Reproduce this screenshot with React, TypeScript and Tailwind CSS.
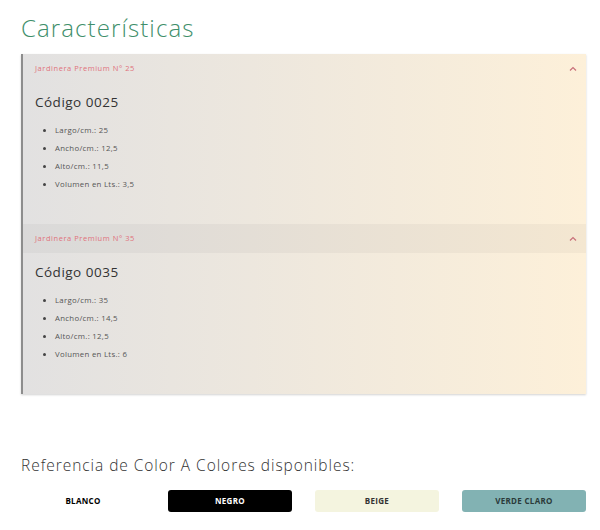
import { useState } from "react";

interface Producto {
  titulo: string;
  codigo: string;
  medidas: string[];
}

const productos: Producto[] = [
  {
    titulo: "Jardinera Premium N° 25",
    codigo: "Código 0025",
    medidas: ["Largo/cm.: 25", "Ancho/cm.: 12,5", "Alto/cm.: 11,5", "Volumen en Lts.: 3,5"],
  },
  {
    titulo: "Jardinera Premium N° 35",
    codigo: "Código 0035",
    medidas: ["Largo/cm.: 35", "Ancho/cm.: 14,5", "Alto/cm.: 12,5", "Volumen en Lts.: 6"],
  },
];

function Caret() {
  return (
    <svg width="8" height="6" viewBox="0 0 8 6" fill="none">
      <path d="M1 4.5 L4 1.5 L7 4.5" stroke="#c9707a" strokeWidth="1.2" />
    </svg>
  );
}

function Seccion(props: { p: Producto; activo: boolean }) {
  const [abierto, setAbierto] = useState(true);
  return (
    <div>
      <div
        className={
          "h-[29px] pl-[12px] pr-[9px] flex items-center justify-between cursor-pointer " +
          (props.activo ? "bg-black/[0.035]" : "")
        }
        onClick={() => setAbierto(!abierto)}
      >
        <span className="text-[7.5px] tracking-[0.55px] text-[#e0727c]">{props.p.titulo}</span>
        <Caret />
      </div>
      {abierto && (
        <div className="pl-[12px] pt-[9px] pb-[31px]">
          <div className="text-[13.5px] leading-[20px] tracking-[0.5px] text-[#333]">{props.p.codigo}</div>
          <ul className="mt-[9px] pl-[20px] list-disc text-[7.8px] tracking-[0.3px] text-[#555] marker:text-[#444]">
            {props.p.medidas.map((m) => (
              <li key={m} className="leading-[18px]">
                {m}
              </li>
            ))}
          </ul>
        </div>
      )}
    </div>
  );
}

export default function App() {
  const colores = [
    { nombre: "BLANCO", cls: "bg-white text-black" },
    { nombre: "NEGRO", cls: "bg-black text-white" },
    { nombre: "BEIGE", cls: "bg-[#f4f4df] text-[#333]" },
    { nombre: "VERDE CLARO", cls: "bg-[#82b2b3] text-[#2b3a3a]" },
  ];
  return (
    <div className="w-[600px] h-[530px] bg-white px-[21px] font-['Open_Sans',sans-serif]">
      <h1 className="pt-[14px] text-[24px] leading-[28px] font-light text-[#3f8f6b] tracking-[1.1px]">Características</h1>
      <div className="mt-[12px] w-[565px] border-l-2 border-[#8d8d8d] bg-gradient-to-r from-[#e2e1e1] to-[#fdf0d9] shadow-[0_1px_2px_rgba(0,0,0,0.18)]">
        <Seccion p={productos[0]} activo={false} />
        <Seccion p={productos[1]} activo={true} />
      </div>
      <p className="mt-[61px] text-[15.5px] leading-[20px] font-light tracking-[0.95px] text-[#333]">
        Referencia de Color A Colores disponibles:
      </p>
      <div className="mt-[15px] grid grid-cols-4 gap-[23px] w-[565px]">
        {colores.map((c) => (
          <div
            key={c.nombre}
            className={"h-[22px] rounded-[3px] flex items-center justify-center text-[8px] tracking-[0.3px] font-bold " + c.cls}
          >
            {c.nombre}
          </div>
        ))}
      </div>
    </div>
  );
}
